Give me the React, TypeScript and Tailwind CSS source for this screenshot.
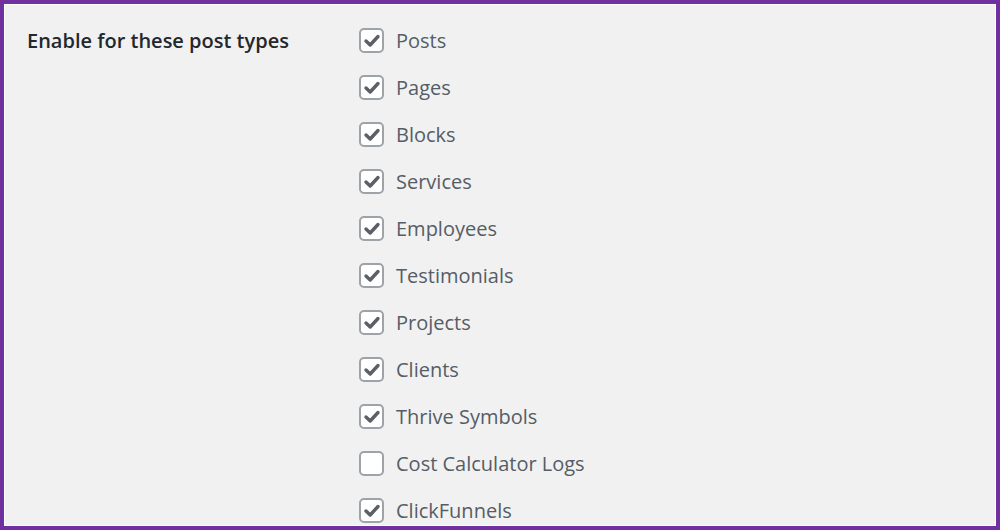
import React from 'react';

const postTypes = [
    { label: 'Posts', checked: true },
    { label: 'Pages', checked: true },
    { label: 'Blocks', checked: true },
    { label: 'Services', checked: true },
    { label: 'Employees', checked: true },
    { label: 'Testimonials', checked: true },
    { label: 'Projects', checked: true },
    { label: 'Clients', checked: true },
    { label: 'Thrive Symbols', checked: true },
    { label: 'Cost Calculator Logs', checked: false },
    { label: 'ClickFunnels', checked: true },
];

const Checkbox: React.FC<{ checked: boolean }> = ({ checked }) => (
    <span className="w-[25px] h-[25px] shrink-0 rounded-[5px] border-2 border-[#9ea3a8] bg-white flex items-center justify-center">
        {checked && (
            <svg viewBox="0 0 20 20" className="w-[20px] h-[20px]">
                <path d="M4 10 L8.2 14 L16 5.5" fill="none" stroke="#5a6066" strokeWidth="3.4" strokeLinecap="round" strokeLinejoin="round" />
            </svg>
        )}
    </span>
);

export default function App() {
    return (
        <div className="w-[1000px] h-[530px] border-4 border-[#7030a0] overflow-hidden" style={{ fontFamily: '"Open Sans", sans-serif' }}>
            <div className="w-full h-full border border-white bg-[#f1f1f1] flex items-start pl-[22px] pt-[12px]">
                {/* Label column */}
                <div className="w-[332px] shrink-0 h-[47px] flex items-center">
                    <h2 className="text-[20px] font-semibold text-[#23282d]">Enable for these post types</h2>
                </div>

                {/* Checkbox list */}
                <div className="flex flex-col shrink-0">
                    {postTypes.map((t) => (
                        <label key={t.label} className="h-[47px] shrink-0 flex items-center gap-[12px]">
                            <Checkbox checked={t.checked} />
                            <span className="text-[20px] text-[#555d66]">{t.label}</span>
                        </label>
                    ))}
                </div>
            </div>
        </div>
    );
}
